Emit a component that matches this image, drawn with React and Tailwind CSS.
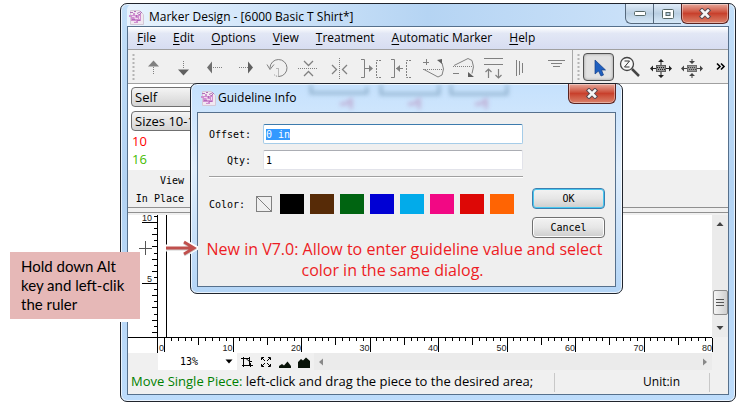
import React, { useEffect, useRef, useState } from 'react';

const menus = ['File', 'Edit', 'Options', 'View', 'Treatment', 'Automatic Marker', 'Help'];

const swatches = [
  { name: 'Black', className: 'bg-black' },
  { name: 'Brown', className: 'bg-[#572b07]' },
  { name: 'Green', className: 'bg-[#006411]' },
  { name: 'Blue', className: 'bg-[#0000d4]' },
  { name: 'Cyan', className: 'bg-[#02abea]' },
  { name: 'Pink', className: 'bg-[#f20884]' },
  { name: 'Red', className: 'bg-[#dd0806]' },
  { name: 'Orange', className: 'bg-[#ff6403]' },
];

// Every tool icon is drawn in a 31x32 cell
const tools = [
  {
    name: 'Move up',
    icon: (
      <>
        <path d="M15.5 9.500l5.500 6h-11z" fill="#808080" stroke="none" />
        <path d="M15.5 16v8" strokeDasharray="1 1" />
      </>
    ),
  },
  {
    name: 'Move down',
    icon: (
      <>
        <path d="M14.5 24.500l-5.500-6h11z" fill="#606060" stroke="none" />
        <path d="M14.5 10v8" strokeDasharray="1 1" />
      </>
    ),
  },
  {
    name: 'Move left',
    icon: (
      <>
        <path d="M7 16.500l5-6v12z" fill="#707070" stroke="none" />
        <path d="M13 16.500h9" strokeDasharray="1 1" />
      </>
    ),
  },
  {
    name: 'Move right',
    icon: (
      <>
        <path d="M22 16.500l-5-6v12z" fill="#606060" stroke="none" />
        <path d="M8 16.500h9" strokeDasharray="1 1" />
      </>
    ),
  },
  {
    name: 'Rotate',
    icon: (
      <>
        <path d="M8 17a8.500 8.500 0 1 1 9 8.500" />
        <path d="M5 13.500l3 5 4-5" />
        <path d="M17 25.500q-3 0-5-2M14.500 17.500h2v8" strokeDasharray="1 1" />
      </>
    ),
  },
  {
    name: 'Flip vertical',
    icon: (
      <>
        <path d="M5 17.500h20" strokeDasharray="1 1" />
        <path d="M11 10l4.500 4.500 4.500-4.500M11 25l4.500-4.500 4.500 4.500" strokeWidth="1.300" />
      </>
    ),
  },
  {
    name: 'Flip horizontal',
    icon: (
      <>
        <path d="M15.500 7v21" strokeDasharray="1 1" />
        <path d="M8 14l4.500 4.500-4.500 4.500M23 14l-4.500 4.500 4.500 4.500" strokeWidth="1.300" />
      </>
    ),
  },
  {
    name: 'Butt right',
    icon: (
      <>
        <path d="M6 8.500h3.500v18H6M10 17.500h7" />
        <path d="M14 14v7l4-3.500z" fill="#808080" stroke="none" />
        <path d="M26 9.500h-4.500v17H26" strokeDasharray="2 1" />
      </>
    ),
  },
  {
    name: 'Butt left',
    icon: (
      <>
        <path d="M5 8.500h3.500v18H5M10 17.500h7" />
        <path d="M14 14v7l-4-3.500z" fill="#808080" stroke="none" />
        <path d="M25 9.500h-4.500v17H25" strokeDasharray="2 1" />
      </>
    ),
  },
  {
    name: 'Tilt up',
    icon: (
      <>
        <path d="M6 11.500h6M9.500 8v6M7 18.500l14 7.500 4-2q3-6 0-12" />
        <path d="M6 18.500h20" strokeDasharray="1 1" />
        <path d="M20 9l5-1v5z" fill="#606060" stroke="none" />
      </>
    ),
  },
  {
    name: 'Tilt down',
    icon: (
      <>
        <path d="M5 22.500h6M6 14.500l14-7 4 2q3 6 0 13" />
        <path d="M5 15.500h20" strokeDasharray="1 1" />
        <path d="M20 21v5h6z" fill="#606060" stroke="none" />
      </>
    ),
  },
  {
    name: 'Align top',
    icon: <path d="M5 7.500h19M5 13.500h19M9.500 27v-9M6.500 21l3-3 3 3M19.500 18v9M16.500 24l3 3 3-3" strokeWidth="1.200" />,
  },
  { name: 'Vertical stripe', icon: <path d="M6.500 9v16M9.500 10v14M12.500 12v10" /> },
  { name: 'Horizontal stripe', icon: <path d="M7 9.500h17M10 12.500h11M12 15.500h7" /> },
];

const ToolIcon = ({ children }) => (
  <svg width="31" height="32" viewBox="0 0 31 32" fill="none" stroke="#808080" aria-hidden="true">
    {children}
  </svg>
);

const Grip = () => (
  <svg width="4" height="28" aria-hidden="true" className="shrink-0">
    <path d="M1.500 1v27" stroke="#b4b4b4" strokeWidth="2" strokeDasharray="2 2" />
  </svg>
);

const AppIcon = () => (
  <svg width="15" height="15" viewBox="0 0 15 15" aria-hidden="true" className="shrink-0">
    <path d="M1.500 0.500h9l4 4v10h-13z" fill="#f1e8f1" stroke="#d3c9d6" />
    <path d="M0 5h4V3h2v2h3V4h3v7H9v2H5v-2H2V7H0z" fill="#cf8fd0" />
    <path d="M1 2.500h3M5 1.500h2M8 3.500l4-2M10 5l3-3" stroke="#b070b8" />
    <path d="M3 6.500h3v2h3M5 11.500h2M10.500 6v3" stroke="#f1d9ef" fill="none" />
    <path d="M3 9.500h3M8 10.500h3M7.500 5v2" stroke="#b268b8" fill="none" />
  </svg>
);

const CloseIcon = () => (
  <svg width="14" height="11" viewBox="0 0 14 11" aria-hidden="true">
    <path d="M4 2.500l6 6M10 2.500l-6 6" stroke="#5b4a50" strokeWidth="4.500" strokeLinecap="square" />
    <path d="M4 2.500l6 6M10 2.500l-6 6" stroke="#f6f6f6" strokeWidth="2.500" strokeLinecap="square" />
  </svg>
);

const CloseButton = ({ label }) => (
  <button
    type="button"
    aria-label={label}
    className="flex h-5 w-12 items-center justify-center rounded-b-md border border-t-0 border-[#5a2422] bg-linear-to-b from-[#e5a79b] via-[#c8402c] via-50% to-[#d9806a] shadow-[inset_0_0_0_1px_#ffffff60]"
  >
    <CloseIcon />
  </button>
);

const Rulers = () => {
  const svgRef = useRef(null);
  const [width, setWidth] = useState(584);

  useEffect(() => {
    const observer = new ResizeObserver(([entry]) => setWidth(entry.contentRect.width));
    observer.observe(svgRef.current);
    return () => observer.disconnect();
  }, []);

  const vTicks = Array.from({ length: 20 }, (_, i) => i - 1);
  const count = Math.max(0, Math.floor((width - 36) / 6.85));
  const hTicks = Array.from({ length: count + 1 }, (_, i) => i);

  return (
    <svg ref={svgRef} width="100%" height="138" className="block overflow-visible" aria-label="Marker canvas">
      <g stroke="#000" fill="none" shapeRendering="crispEdges">
        <path d="M29.500 0v138M38.500 0v122" />
        <line x1="0" y1="122.500" x2="100%" y2="122.500" />
        {vTicks.map((i) => {
          const y = Math.round(7 + i * 6.1) + 0.5;
          const len = i % 10 === 0 ? 15 : i % 2 === 0 ? 5 : 3;
          return <line key={i} x1={29 - len} x2="29" y1={y} y2={y} />;
        })}
        {hTicks.map((i) => {
          const x = Math.round(36 + i * 6.85) + 0.5;
          const len = i % 10 === 0 ? 14 : i % 5 === 0 ? 7 : 3;
          return <line key={i} x1={x} x2={x} y1="123" y2={123 + len} />;
        })}
        <path d="M17.500 26v14M11 33.500h13" stroke="#555" />
      </g>
      <g fontSize="9" textAnchor="end" fill="#222">
        <text x="24" y="6">10</text>
        <text x="24" y="67">5</text>
        {hTicks.filter((i) => i % 10 === 0).map((i) => (
          <text key={i} x={36 + i * 6.85} y="136">{i}</text>
        ))}
      </g>
    </svg>
  );
};

const DialogButton = ({ children, primary }) => (
  <button
    type="button"
    className={`h-[21px] w-full rounded-sm border bg-linear-to-b from-[#f3f3f3] via-[#e6e6e6] via-50% to-[#cdcdcd] font-['DejaVu_Sans_Mono',monospace] text-[10px] ${
      primary ? 'border-[#3c7fb1] shadow-[inset_0_0_0_1px_#48c8f0]' : 'border-[#707070] shadow-[inset_0_0_0_1px_#fcfcfc]'
    }`}
  >
    {children}
  </button>
);

const GuidelineDialog = () => {
  const [offset, setOffset] = useState('0 in');
  const [qty, setQty] = useState('1');
  const offsetRef = useRef(null);

  useEffect(() => {
    offsetRef.current.focus();
    offsetRef.current.select();
  }, []);

  return (
    <div
      role="dialog"
      aria-labelledby="guideline-title"
      className="absolute top-[79px] left-[69px] w-[433px] rounded-[7px] border border-[#20242c] bg-linear-to-b from-[#c5e1fd] via-[#e0eefc] via-40% to-[#b4d5f6] px-[6px] pb-[6px] shadow-[inset_0_0_0_1px_#ffffffb0]"
    >
      <svg className="absolute top-px left-20 blur-[2px]" width="240" height="27" aria-hidden="true">
        <path d="M40 0v8h56V2M110 0v9h58V0M180 0v9h56V0" fill="none" stroke="#93b4d0" strokeWidth="3" />
        <path d="M69 19h5l6-4v9M137 19h5l6-4v9M204 19h5l6-4v9" fill="none" stroke="#bfb0d6" strokeWidth="3" />
      </svg>
      <div className="relative flex h-7 items-start pl-1">
        <div className="flex h-full flex-1 items-center gap-[2px]">
          <AppIcon />
          <h2 id="guideline-title" className="text-[12px]">Guideline Info</h2>
        </div>
        <CloseButton label="Close dialog" />
      </div>
      <form className="border border-[#56708c] bg-[#efefef] pt-[11px] pb-[5px]" onSubmit={(e) => e.preventDefault()}>
        <div className="flex gap-[9px] pr-[10px] pl-[11px]">
          <div className="flex-1 font-['DejaVu_Sans_Mono',monospace] text-[10px]">
            <div className="flex items-center gap-3">
              <label htmlFor="offset" className="w-[42px] text-right">Offset:</label>
              <input
                id="offset"
                ref={offsetRef}
                value={offset}
                onChange={(e) => setOffset(e.target.value)}
                className="h-5 min-w-0 flex-1 rounded-xs border border-[#a5cce8] border-t-[#3d7bad] bg-white px-0.5 outline-none selection:bg-[#3399ff] selection:text-white"
              />
            </div>
            <div className="mt-[6px] flex items-center gap-3">
              <label htmlFor="qty" className="w-[42px] text-right">Qty:</label>
              <input
                id="qty"
                value={qty}
                onChange={(e) => setQty(e.target.value)}
                className="h-5 min-w-0 flex-1 rounded-xs border border-[#e2e3ea] border-t-[#abadb3] bg-white px-0.5 outline-none"
              />
            </div>
            <div className="mt-[6px] border-t border-[#a0a0a0] border-b border-b-white" />
            <div className="mt-4 flex items-center gap-[6px]">
              <span className="mr-[5px]">Color:</span>
              <button type="button" aria-label="No color" className="mr-[2px] h-4 w-4 border border-[#808080]">
                <svg viewBox="0 0 14 14" className="block h-full w-full" stroke="#808080" aria-hidden="true">
                  <path d="M0 0l14 14" />
                </svg>
              </button>
              {swatches.map((swatch) => (
                <button key={swatch.name} type="button" aria-label={swatch.name} className={`h-5 w-6 ${swatch.className}`} />
              ))}
            </div>
          </div>
          <div className="mt-16 flex w-[73px] flex-col gap-2">
            <DialogButton primary>OK</DialogButton>
            <DialogButton>Cancel</DialogButton>
          </div>
        </div>
        <p className="pr-2 pl-1 pt-px text-center text-[16px] leading-[21px] whitespace-nowrap text-[#ed1c24]">
          New in V7.0: Allow to enter guideline value and select
          <span className="block pr-6">color in the same dialog.</span>
        </p>
      </form>
    </div>
  );
};

const Toolbar = () => (
  <div className="flex h-[34px] items-center overflow-hidden border-b border-[#a0a0a0] bg-[#f0f0f0] pl-1">
    <Grip />
    <div className="ml-[2px] flex shrink-0">
      {tools.map((tool) => (
        <button key={tool.name} type="button" aria-label={tool.name}>
          <ToolIcon>{tool.icon}</ToolIcon>
        </button>
      ))}
    </div>
    <div className="h-full w-px shrink-0 bg-[#a8a8a8]" />
    <div className="ml-1 flex shrink-0 items-center">
      <Grip />
      <button
        type="button"
        aria-label="Select"
        aria-pressed="true"
        className="ml-[2px] h-7 w-[31px] rounded-sm border border-[#505050] bg-[#e2e2e2] shadow-[inset_0_0_3px_#909090]"
      >
        <svg width="29" height="26" viewBox="0 0 29 26" aria-hidden="true">
          <path d="M11 6v14l3.500-3 2.500 5 2.500-1-2-5h4z" fill="#1f5fbf" stroke="#163f86" strokeWidth="0.700" />
        </svg>
      </button>
      <button type="button" aria-label="Zoom">
        <svg width="31" height="32" viewBox="0 0 31 32" fill="none" aria-hidden="true">
          <circle cx="13" cy="13" r="6.500" fill="#f8f8f8" stroke="#444" strokeWidth="1.300" />
          <path d="M10.500 10h5l-5 6h5" stroke="#333" />
          <path d="M18 18l7 7" stroke="#444" strokeWidth="2.500" />
        </svg>
      </button>
      <button type="button" aria-label="Spread pieces">
        <svg width="31" height="32" viewBox="0 0 31 32" fill="none" stroke="#222" aria-hidden="true">
          <rect x="11" y="14" width="10" height="7" fill="#999" stroke="none" />
          <rect x="11.500" y="14.500" width="9" height="6" strokeDasharray="1 1" />
          <path d="M12 16.500h8M13 18.500h8" strokeDasharray="1 1" />
          <path d="M16 14V9M16 21v5M11 17.500H6M21 17.500h5" />
          <path d="M16 8l3 3h-6zM16 27l3-3h-6zM5 17.500l3-3v6zM27 17.500l-3-3v6z" fill="#222" stroke="none" />
        </svg>
      </button>
      <button type="button" aria-label="Gather pieces">
        <svg width="31" height="32" viewBox="0 0 31 32" fill="none" stroke="#444" aria-hidden="true">
          <rect x="11" y="14" width="10" height="7" fill="#999" stroke="none" />
          <rect x="11.500" y="14.500" width="9" height="6" strokeDasharray="1 1" />
          <path d="M12 16.500h8M13 18.500h8" strokeDasharray="1 1" />
          <path d="M16 12V8M16 23v4M11 17.500H6M21 17.500h5" />
          <path d="M16 13l3-3h-6zM16 22l3 3h-6zM5 17.500l3-3v6zM27 17.500l-3-3v6z" fill="#444" stroke="none" />
        </svg>
      </button>
    </div>
    <button type="button" aria-label="More tools" className="mr-[2px] ml-auto shrink-0">
      <svg width="10" height="9" viewBox="0 0 10 9" fill="none" stroke="#000" strokeWidth="1.600" aria-hidden="true">
        <path d="M1 1.500l3 3-3 3M5 1.500l3 3-3 3" />
      </svg>
    </button>
  </div>
);

const App = () => {
  return (
    <div className="relative min-h-screen bg-white pt-[3px] pr-[2px] pl-[120px] font-['Open_Sans',sans-serif] text-black">
      <div className="relative rounded-[7px] border border-[#20242c] bg-linear-to-b from-[#c3dff9] via-[#b3d3f3] via-45% to-[#bddcfb] px-[6px] pb-[6px] shadow-[inset_0_0_0_1px_#ffffffb0]">
        <header className="flex h-[22px] items-start rounded-t-md bg-linear-to-r from-[#e8f3fe] via-[#b5d4f3] to-[#d4e7fb] pl-[2px]">
          <div className="flex h-[26px] flex-1 items-center gap-[5px]">
            <AppIcon />
            <h1 className="text-[12px] whitespace-nowrap">Marker Design - [6000 Basic T Shirt*]</h1>
          </div>
          <div className="flex">
            <button
              type="button"
              aria-label="Minimize"
              className="flex h-5 w-7 items-center justify-center rounded-bl-md border border-t-0 border-r-0 border-[#56697d] bg-linear-to-b from-[#e0ecf8] via-[#b9cee2] via-50% to-[#d6e8f8]"
            >
              <svg width="12" height="5" aria-hidden="true">
                <rect x="0.500" y="0.500" width="11" height="4" rx="1" fill="#fff" stroke="#566" />
              </svg>
            </button>
            <button
              type="button"
              aria-label="Maximize"
              className="flex h-5 w-7 items-center justify-center border border-t-0 border-r-0 border-[#56697d] bg-linear-to-b from-[#e0ecf8] via-[#b9cee2] via-50% to-[#d6e8f8]"
            >
              <svg width="12" height="10" aria-hidden="true">
                <rect x="0.500" y="0.500" width="11" height="9" rx="1" fill="#fff" stroke="#566" />
                <rect x="4" y="3.500" width="4" height="3" fill="#b9cee2" stroke="#566" />
              </svg>
            </button>
            <CloseButton label="Close" />
          </div>
        </header>

        <div className="border border-[#56708c] bg-[#f0f0f0]">
          <nav className="flex h-[23px] items-center gap-[17px] border-b border-[#a0a0a0] bg-linear-to-b from-white via-[#e2e7f5] via-30% to-[#d7ddf1] pl-[9px] text-[12px]">
            {menus.map((menu) => (
              <button key={menu} type="button" className="whitespace-nowrap">
                <span className="underline underline-offset-2">{menu[0]}</span>
                {menu.slice(1)}
              </button>
            ))}
          </nav>

          <Toolbar />

          <div className="h-[86px] bg-white pt-[3px] pl-[3px] text-[13px]">
            <select
              aria-label="Fabric"
              className="block h-5 w-28 appearance-none rounded-sm border border-[#707070] bg-linear-to-b from-[#f4f4f4] to-[#d4d4d4] px-[3px] leading-4"
            >
              <option>Self</option>
            </select>
            <select
              aria-label="Sizes"
              className="mt-1 block h-5 w-28 appearance-none rounded-sm border border-[#707070] bg-linear-to-b from-[#f4f4f4] to-[#d4d4d4] px-[3px] leading-4"
            >
              <option>Sizes 10-16</option>
            </select>
            <ul className="pt-px pl-px leading-[18px]">
              <li className="text-[#ff0000]">10</li>
              <li className="text-[#44bb00]">16</li>
            </ul>
          </div>

          <div className="h-[37px] w-14 pt-[2px] text-right font-['DejaVu_Sans_Mono',monospace] text-[10px] leading-[18px]">
            <p>View</p>
            <p>In Place</p>
          </div>
          <div className="h-[6px] border-y border-[#909090]" />

          <div className="flex pt-[2px]">
            <div className="min-w-0 flex-1 bg-white font-['Liberation_Sans',sans-serif]">
              <Rulers />
            </div>
            <div className="w-4">
              <div className="flex h-[122px] flex-col items-center bg-[#ebebeb] py-[6px]">
                <svg width="8" height="6" aria-hidden="true">
                  <path d="M4 1l3.500 4h-7z" fill="#444" />
                </svg>
                <button
                  type="button"
                  aria-label="Scroll vertically"
                  className="mt-auto mb-[10px] flex h-[25px] w-[15px] items-center justify-center rounded-xs border border-[#8b8b8b] bg-linear-to-r from-[#f5f5f5] to-[#cfcfcf]"
                >
                  <svg width="8" height="9" stroke="#555" aria-hidden="true">
                    <path d="M0 1.500h8M0 4.500h8M0 7.500h8" />
                  </svg>
                </button>
                <svg width="8" height="6" aria-hidden="true">
                  <path d="M4 5L0.500 1h7z" fill="#444" />
                </svg>
              </div>
            </div>
          </div>

          <div className="flex h-[17px] items-center pr-4 pl-[30px]">
            <div className="flex h-full w-[79px] items-center bg-white pr-1">
              <select
                aria-label="Zoom level"
                className="h-full min-w-0 flex-1 appearance-none pl-[22px] font-['DejaVu_Sans_Mono',monospace] text-[10px]"
              >
                <option>13%</option>
              </select>
              <svg width="8" height="5" aria-hidden="true">
                <path d="M0.500 0.500h7L4 4.500z" />
              </svg>
            </div>
            <div className="flex gap-[7px] pl-1">
              <button type="button" aria-label="Zoom to piece">
                <svg width="12" height="12" fill="none" stroke="#000" aria-hidden="true">
                  <path d="M0 2.500h9M2.500 1v10M1 9.500h11M8.500 1v8M5 2.500l3.500 3M8 5.500h3M9.500 7v4" />
                </svg>
              </button>
              <button type="button" aria-label="Fit to window">
                <svg width="12" height="12" fill="none" stroke="#000" aria-hidden="true">
                  <path d="M1.500 4V1.500H4M8 1.500h2.500V4M10.500 8v2.500H8M4 10.500H1.500V8M2 2l3 3M10 2L7 5M2 10l3-3M10 10L7 7" />
                </svg>
              </button>
              <button type="button" aria-label="Zoom out">
                <svg width="12" height="12" fill="#0a140a" aria-hidden="true">
                  <path d="M0 12V10l3-2 2 1.500 3.500-4 3.500 4.500v2z" />
                </svg>
              </button>
              <button type="button" aria-label="Zoom in">
                <svg width="12" height="12" fill="#0a140a" aria-hidden="true">
                  <path d="M0 12V6l3-3 2 1.500L8 1.500 12 5v7z" />
                </svg>
              </button>
            </div>
            <div className="ml-1 flex h-full flex-1 items-center justify-between bg-[#ebebeb] px-1">
              <svg width="6" height="8" aria-hidden="true">
                <path d="M1 4l4-3.500v7z" fill="#888" />
              </svg>
              <svg width="6" height="8" aria-hidden="true">
                <path d="M5 4L1 0.500v7z" fill="#888" />
              </svg>
            </div>
          </div>

          <footer className="flex h-6 items-center pr-[18px] pl-[3px] text-[13px] whitespace-nowrap">
            <p className="flex-1">
              <span className="text-[#008000]">Move Single Piece:</span> left-click and drag the piece to the desired area;
            </p>
            <p className="flex h-[19px] w-[156px] items-center justify-end border-x border-[#c8c8c8] pr-[29px] text-[12px]">Unit:in</p>
          </footer>
        </div>

        <GuidelineDialog />
      </div>

      <p className="absolute top-[252px] left-[10px] w-[130px] bg-[#e6b8b7] py-[5px] pl-[11px] font-['Lato',sans-serif] text-[15px] leading-[19px] shadow-[0_3px_0_0_#ffffff]">
        Hold down Alt
        <br />
        key and left-clik
        <br />
        the ruler
      </p>
      <svg className="absolute top-[238px] left-[164px]" width="34" height="20" viewBox="0 0 34 20" fill="none" aria-hidden="true">
        <path d="M2 10h28M19 4l11 6-11 6" stroke="#fff" strokeWidth="7" />
        <path d="M2 11h27M20 5l10 6-10 6" stroke="#00000030" strokeWidth="3" />
        <path d="M2 10h27M20 4l10 6-10 6" stroke="#c0504d" strokeWidth="3" />
      </svg>
    </div>
  );
};

export default App;
